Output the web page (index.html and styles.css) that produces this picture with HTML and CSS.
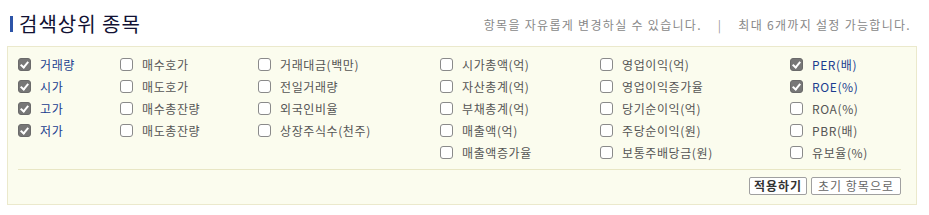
FILE: index.html
```html
<!DOCTYPE html>
<html>
  <head>
    <meta charset="utf-8">
    <title>검색상위 종목</title>
    <link rel="stylesheet" href="styles.css">
  </head>
  <body>
    <div class="head">
      <h2 class="title">검색상위 종목</h2>
      <p class="help">항목을 자유롭게 변경하실 수 있습니다.<span class="sep">|</span>최대 6개까지 설정 가능합니다.</p>
    </div>
    <div class="panel">
      <div class="items">
        <ul class="col c1">
          <li class="on"><span class="box"></span>거래량</li>
          <li class="on"><span class="box"></span>시가</li>
          <li class="on"><span class="box"></span>고가</li>
          <li class="on"><span class="box"></span>저가</li>
        </ul>
        <ul class="col c2">
          <li><span class="box"></span>매수호가</li>
          <li><span class="box"></span>매도호가</li>
          <li><span class="box"></span>매수총잔량</li>
          <li><span class="box"></span>매도총잔량</li>
        </ul>
        <ul class="col c3">
          <li><span class="box"></span>거래대금(백만)</li>
          <li><span class="box"></span>전일거래량</li>
          <li><span class="box"></span>외국인비율</li>
          <li><span class="box"></span>상장주식수(천주)</li>
        </ul>
        <ul class="col c4">
          <li><span class="box"></span>시가총액(억)</li>
          <li><span class="box"></span>자산총계(억)</li>
          <li><span class="box"></span>부채총계(억)</li>
          <li><span class="box"></span>매출액(억)</li>
          <li><span class="box"></span>매출액증가율</li>
        </ul>
        <ul class="col c5">
          <li><span class="box"></span>영업이익(억)</li>
          <li><span class="box"></span>영업이익증가율</li>
          <li><span class="box"></span>당기순이익(억)</li>
          <li><span class="box"></span>주당순이익(원)</li>
          <li><span class="box"></span>보통주배당금(원)</li>
        </ul>
        <ul class="col c6">
          <li class="on"><span class="box"></span>PER(배)</li>
          <li class="on"><span class="box"></span>ROE(%)</li>
          <li><span class="box"></span>ROA(%)</li>
          <li><span class="box"></span>PBR(배)</li>
          <li><span class="box"></span>유보율(%)</li>
        </ul>
      </div>
      <div class="actions">
        <button class="btn apply">적용하기</button>
        <button class="btn">초기 항목으로</button>
      </div>
    </div>
  </body>
</html>
```

FILE: styles.css
```css
* {
  box-sizing: border-box;
}

body {
  margin: 0;
  padding: 0;
  background: #fff;
  font-family: "Noto Sans CJK KR", "Noto Sans", sans-serif;
  font-size: 12px;
  color: #555;
}

ul {
  margin: 0;
  padding: 0;
  list-style: none;
}

/*----- HEAD -----*/

.head {
  display: flex;
  align-items: center;
  justify-content: space-between;
  height: 46px;
  padding: 2px 18px 0 10px;
}

.title {
  margin: 0;
  padding-left: 6px;
  border-left: 3px solid #2d54a8;
  font-size: 20px;
  font-weight: normal;
  line-height: 16px;
  color: #111133;
  letter-spacing: 1px;
}

.help {
  margin: 0;
  font-size: 12px;
  color: #888;
  letter-spacing: 1.3px;
}

.help .sep {
  margin: 0 16px;
  color: #999;
}

/*----- PANEL -----*/

.panel {
  width: 910px;
  margin-left: 7px;
  background: #fbfcee;
  border: 1px solid #ebe9cc;
  padding: 6px 15px 9px 10px;
}

.items {
  display: flex;
  height: 110px;
}

.col li {
  display: flex;
  align-items: center;
  height: 22px;
  letter-spacing: 0.6px;
}

.c1 { width: 102px; }
.c2 { width: 138px; }
.c3 { width: 182px; }
.c4 { width: 160px; }
.c5 { width: 190px; }
.c6 { flex: 1; }

.box {
  flex: 0 0 auto;
  position: relative;
  width: 13px;
  height: 13px;
  margin-right: 9px;
  border: 1px solid #8a8a8a;
  border-radius: 3px;
  background: #fff;
}

.on {
  color: #1a3d8f;
}

.on .box {
  background: #777;
  border-color: #6a6a6a;
}

.on .box:after {
  content: "";
  position: absolute;
  left: 3px;
  top: 1px;
  width: 3px;
  height: 6px;
  border: solid #fff;
  border-width: 0 2px 2px 0;
  transform: rotate(40deg);
}

.actions {
  display: flex;
  justify-content: flex-end;
  gap: 4px;
  margin-top: 6px;
  padding-top: 7px;
  border-top: 1px solid #e8e6c4;
}

.btn {
  height: 18px;
  padding: 0 6px;
  background: #fff;
  border: 1px solid #a0a0a0;
  border-radius: 2px;
  font-family: inherit;
  font-size: 12px;
  line-height: 14px;
  color: #666;
  letter-spacing: 1px;
}

.btn.apply {
  padding: 0 4px;
  font-weight: bold;
  color: #333;
}
```
